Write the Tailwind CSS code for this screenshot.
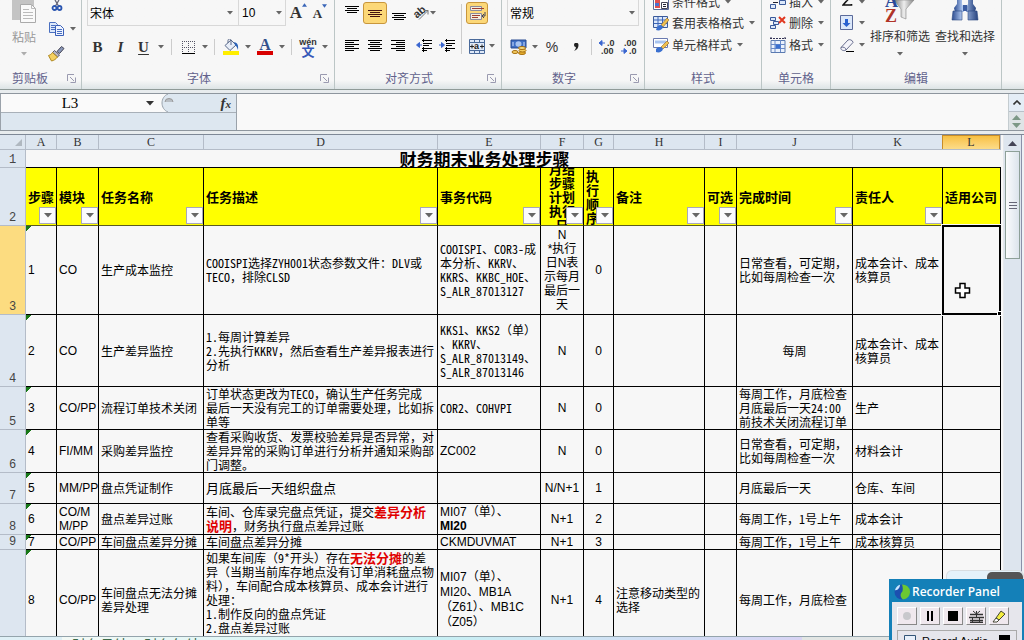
<!DOCTYPE html>
<html lang="zh-CN">
<head>
<meta charset="utf-8">
<title>财务期末业务处理步骤</title>
<script src="https://cdn.jsdelivr.net/npm/@tailwindcss/browser@4"></script>
</head>
<body class="relative flex h-screen flex-col overflow-hidden bg-[#f7f7f7] font-['Noto_Sans_CJK_SC',sans-serif] text-[12px] leading-[14px] text-black">

<svg class="hidden" aria-hidden="true">
  <symbol id="arr" viewBox="0 0 6 4"><path d="M0 0h6L3 3.6z" fill="#666"/></symbol>
  <symbol id="launch" viewBox="0 0 9 9"><path d="M.5 7V.5H7M3 3l4 4M8.5 3.500v5h-5" fill="none" stroke="#9a9ab0"/></symbol>
  <symbol id="filt" viewBox="0 0 8 5"><path d="M0 0h8L4 4.500z" fill="#666"/></symbol>
</svg>

<!-- Ribbon -->
<header class="flex h-[90px] shrink-0 overflow-hidden border-b border-[#8f9a98] bg-linear-to-b from-[#f7f7f7] from-90% to-[#dde4e6] text-[#333]">

  <section class="flex w-[82px] shrink-0 flex-col border-r border-[#bcc6c6]" aria-label="剪贴板">
    <div class="flex h-[71px]">
      <button class="flex w-[48px] flex-col items-center text-[#999]">
        <svg class="h-[24px] w-[28px]" viewBox="0 0 28 24"><path d="M2 0h22v20H2z" fill="#c4c4c4"/><path d="M10.500 4.500h11l4 4v14h-15z" fill="#fafafa" stroke="#aaa"/><path d="M21.500 4.500v4h4M13 9.500h6M13 12.500h10M13 15.500h10M13 18.500h10" fill="none" stroke="#bbb"/></svg>
        <span class="mt-[6px]">粘贴</span>
        <svg class="mt-[8px] h-[4px] w-[6px] opacity-50"><use href="#arr"/></svg>
      </button>
      <div class="flex flex-col">
        <button class="flex h-[12px] w-[18px] justify-center" aria-label="剪切"><svg class="h-[12px] w-[12px]" viewBox="0 0 12 12"><path d="M4 0l3.500 6M8 0L4.500 6" stroke="#667" stroke-width="1.300"/><circle cx="3.500" cy="8" r="2" fill="none" stroke="#2a55b0" stroke-width="1.800"/><circle cx="8.500" cy="8" r="2" fill="none" stroke="#2a55b0" stroke-width="1.800"/></svg></button>
        <button class="mt-[9px] flex h-[16px] items-center gap-[5px]" aria-label="复制"><svg class="h-[14px] w-[17px]" viewBox="0 0 17 14"><path d="M1.500.5h6l2 2v8h-8z" fill="#dce8fa" stroke="#4a6fc0"/><path d="M3 3.500h4M3 5.500h5M3 7.500h4" stroke="#4a6fc0"/><path d="M7.500 3.500h5l3 3v7h-8z" fill="#eef4ff" stroke="#3a5fb8"/><path d="M9 7.500h5M9 9.500h5M9 11.500h5" stroke="#4a6fc0"/></svg><svg class="h-[4px] w-[6px]"><use href="#arr"/></svg></button>
        <button class="mt-[9px] h-[16px] w-[17px]" aria-label="格式刷"><svg class="h-[16px] w-[17px]" viewBox="0 0 17 16"><path d="M13.500.5l2.500 2-4.500 5-2.500-2z" fill="#8a98b8" stroke="#445"/><path d="M6.500 4.500l5 4.500-2 2-5-4.500z" fill="#b8b8c8" stroke="#556"/><path d="M4.500 6.500l5 4.500c-1.500 2-3.500 3.500-6 4L.5 9.500c1.500-.5 3-1.500 4-3z" fill="#f4d060" stroke="#b08820"/></svg></button>
      </div>
    </div>
    <div class="flex items-center pr-[5px] pl-[2px] text-[#62628c]"><span class="flex-1 pr-[10px] pl-[10px]">剪贴板</span><svg class="h-[9px] w-[9px]"><use href="#launch"/></svg></div>
  </section>

  <section class="flex w-[253px] shrink-0 flex-col border-r border-[#bcc6c6]" aria-label="字体">
    <div class="flex h-[26px] pl-[5px]">
      <div class="relative"><select aria-label="字体名称" class="h-[26px] w-[152px] appearance-none border border-t-0 border-[#d8d8d8] pl-[2px] text-black"><option>宋体</option></select><svg class="absolute top-[11px] right-[6px] h-[4px] w-[6px]"><use href="#arr"/></svg></div>
      <div class="relative"><select aria-label="字号" class="h-[26px] w-[47px] appearance-none border border-t-0 border-l-0 border-[#d8d8d8] pl-[3px] font-['Liberation_Sans',sans-serif] text-black"><option>10</option></select><svg class="absolute top-[11px] right-[4px] h-[4px] w-[6px]"><use href="#arr"/></svg></div>
      <button class="flex w-[23px] justify-center pt-[3px] pl-[2px] font-['Liberation_Serif',serif] text-[17px] leading-[20px] font-bold" aria-label="增大字号">A<svg class="h-[4px] w-[5px]" viewBox="0 0 6 4"><path d="M0 4h6L3 0z" fill="#3a66b8"/></svg></button>
      <button class="flex w-[22px] justify-center pt-[4px] font-['Liberation_Serif',serif] text-[13px] leading-[20px] font-bold" aria-label="减小字号">A<svg class="h-[4px] w-[5px]" viewBox="0 0 6 4"><path d="M0 0h6L3 4z" fill="#3a66b8"/></svg></button>
    </div>
    <div class="mt-[9px] flex h-[24px] items-center pl-[4px] font-['Liberation_Serif',serif] text-[15px]">
      <button class="w-[23px] font-bold">B</button>
      <button class="w-[23px] font-bold italic">I</button>
      <button class="w-[23px] font-bold underline underline-offset-2">U</button>
      <button class="flex w-[12px] justify-center" aria-label="下划线选项"><svg class="h-[4px] w-[6px]"><use href="#arr"/></svg></button>
      <span class="mx-[4px] h-[16px] w-px bg-[#ccc]"></span>
      <button class="flex w-[24px] justify-center" aria-label="边框"><svg class="h-[13px] w-[13px]" viewBox="0 0 13 13"><path d="M0 .5h13M0 6.500h13M.5 0v12M6.500 0v12M12.500 0v12" stroke="#556" stroke-dasharray="1 1"/><path d="M0 12.500h13" stroke="#000"/></svg></button>
      <button class="flex w-[10px] justify-center" aria-label="边框选项"><svg class="h-[4px] w-[6px]"><use href="#arr"/></svg></button>
      <span class="mx-[4px] h-[16px] w-px bg-[#ccc]"></span>
      <button class="flex w-[24px] justify-center" aria-label="填充颜色"><svg class="h-[16px] w-[16px]" viewBox="0 0 16 16"><path d="M2 6.500L8 1l5 5-6 5.500z" fill="#e8eef8" stroke="#5a6a8a"/><path d="M8 6V1.500C8-.5 5-.5 5 1.500V4" fill="none" stroke="#5a6a8a"/><path d="M11 3c4 1 4.500 3.500 4 8-1-2-1-3.500-3-5z" fill="#2a62b8"/><path d="M0 12h16v4H0z" fill="#ffee00"/></svg></button>
      <button class="flex w-[10px] justify-center" aria-label="填充颜色选项"><svg class="h-[4px] w-[6px]"><use href="#arr"/></svg></button>
      <button class="flex w-[24px] flex-col items-center text-[16px] leading-[12px] font-bold text-[#33508c]" aria-label="字体颜色">A<span class="h-[4px] w-[16px] bg-[#d80000]"></span></button>
      <button class="flex w-[10px] justify-center" aria-label="字体颜色选项"><svg class="h-[4px] w-[6px]"><use href="#arr"/></svg></button>
      <span class="mx-[4px] h-[16px] w-px bg-[#ccc]"></span>
      <button class="flex w-[24px] flex-col items-center text-[#333]"><span class="font-['Liberation_Sans',sans-serif] text-[9px] leading-[6px] font-bold">wén</span><span class="font-['Noto_Sans_CJK_SC',sans-serif] text-[13px] leading-[11px] font-bold text-[#3558b8]">文</span></button>
      <button class="flex w-[10px] justify-center" aria-label="拼音选项"><svg class="h-[4px] w-[6px]"><use href="#arr"/></svg></button>
    </div>
    <div class="mt-[12px] flex items-center pr-[5px] text-[#62628c]"><span class="flex-1 pr-[4px] text-center">字体</span><svg class="h-[9px] w-[9px]"><use href="#launch"/></svg></div>
  </section>

  <section class="flex w-[167px] shrink-0 flex-col border-r border-[#bcc6c6]" aria-label="对齐方式">
    <div class="flex h-[59px]">
      <div class="flex w-[126px] flex-col pl-[5px]">
        <div class="mt-[2px] flex h-[22px] items-center">
          <button class="flex w-[23px] justify-center" aria-label="顶端对齐"><svg class="h-[16px] w-[14px]" viewBox="0 0 14 16"><path d="M0 1.500h14M2 3.500h10M0 5.500h14M2 7.500h10" stroke="#000"/></svg></button>
          <button class="flex h-[22px] w-[24px] items-center justify-center rounded-[3px] border border-[#c8963c] bg-[#fcd878]" aria-label="垂直居中"><svg class="h-[16px] w-[14px]" viewBox="0 0 14 16"><path d="M0 5.500h14M2 7.500h10M0 9.500h14M2 11.500h10" stroke="#411"/></svg></button>
          <button class="flex w-[23px] justify-center" aria-label="底端对齐"><svg class="h-[16px] w-[14px]" viewBox="0 0 14 16"><path d="M0 8.500h14M2 10.500h10M0 12.500h14M2 14.500h10" stroke="#000"/></svg></button>
          <button class="ml-[3px] flex w-[30px] items-center" aria-label="方向"><svg class="h-[16px] w-[17px] shrink-0" viewBox="0 0 17 16"><text x="1" y="12" transform="rotate(-40 5 9)" font-family="Liberation Sans" font-size="11" font-weight="bold" fill="#333">ab</text><path d="M6 14.500l9-9M11 5.500h4v4" stroke="#777" fill="none"/></svg><svg class="h-[4px] w-[6px] shrink-0"><use href="#arr"/></svg></button>
        </div>
        <div class="mt-[11px] flex h-[22px] items-center">
          <button class="flex w-[24px] justify-center" aria-label="左对齐"><svg class="h-[13px] w-[14px]" viewBox="0 0 14 13"><path d="M0 .5h14M0 2.500h9M0 4.500h14M0 6.500h9M0 8.500h14M0 10.500h9" stroke="#000"/></svg></button>
          <button class="flex w-[22px] justify-center" aria-label="居中"><svg class="h-[13px] w-[14px]" viewBox="0 0 14 13"><path d="M0 .5h14M2 2.500h10M0 4.500h14M2 6.500h10M0 8.500h14M2 10.500h10" stroke="#000"/></svg></button>
          <button class="flex w-[24px] justify-center" aria-label="右对齐"><svg class="h-[13px] w-[14px]" viewBox="0 0 14 13"><path d="M0 .5h14M5 2.500h9M0 4.500h14M5 6.500h9M0 8.500h14M5 10.500h9" stroke="#000"/></svg></button>
          <button class="ml-[2px] flex w-[23px] justify-center" aria-label="减少缩进"><svg class="h-[14px] w-[16px]" viewBox="0 0 16 14"><path d="M6 1.500h10M8 4.500h8M8 6.500h5M6 9.500h10M6 11.500h5" stroke="#000"/><path d="M7.500 0v14" stroke="#000" stroke-dasharray="1 1"/><path d="M6 6H3M3.500 3.500L.5 6l3 2.500z" stroke="#3a66d0" fill="#3a66d0"/></svg></button>
          <button class="flex w-[23px] justify-center" aria-label="增加缩进"><svg class="h-[14px] w-[16px]" viewBox="0 0 16 14"><path d="M6 1.500h10M8 4.500h8M8 6.500h5M6 9.500h10M6 11.500h5" stroke="#000"/><path d="M7.500 0v14" stroke="#000" stroke-dasharray="1 1"/><path d="M0 6h3M2.500 3.500l3 2.500-3 2.500z" stroke="#3a66d0" fill="#3a66d0"/></svg></button>
        </div>
      </div>
      <span class="mt-[4px] h-[50px] w-px bg-[#ccc]"></span>
      <div class="flex flex-col pl-[4px]">
        <button class="mt-[2px] flex h-[22px] w-[22px] items-center justify-center rounded-[3px] border border-[#c8963c] bg-[#fcd878]" aria-label="自动换行"><svg class="h-[18px] w-[18px]" viewBox="0 0 18 18"><path d="M2.500 2.500h11v4h-11zM2.500 9.500h11v6h-11z" fill="#f4ecdc" stroke="#8a8a9a"/><path d="M4 4.500h12M4 11.500h8M4 13.500h6" stroke="#a04030"/><path d="M17 8v4h-2M16 10l-2 2 2 2" fill="none" stroke="#445"/></svg></button>
        <button class="mt-[11px] flex h-[22px] items-center gap-[4px] pl-[3px]" aria-label="合并后居中"><svg class="h-[15px] w-[16px]" viewBox="0 0 16 15"><path d="M.5.5h15v14H.5zM.5 3.500h15M.5 11.500h15M5.500.5v3M10.500.5v3M5.500 11.500v3M10.500 11.500v3" fill="#dfe9f8" stroke="#4a6a9a"/><path d="M1 7.500h4M15 7.500h-4M3 5.500v4M13 5.500v4" stroke="#222"/><text x="5" y="10" font-family="Liberation Sans" font-size="9" font-weight="bold" fill="#222">a</text></svg><svg class="h-[4px] w-[6px]"><use href="#arr"/></svg></button>
      </div>
    </div>
    <div class="mt-[12px] flex items-center pr-[5px] text-[#62628c]"><span class="flex-1 pr-[4px] text-center">对齐方式</span><svg class="h-[9px] w-[9px]"><use href="#launch"/></svg></div>
  </section>

  <section class="flex w-[143px] shrink-0 flex-col border-r border-[#bcc6c6]" aria-label="数字">
    <div class="relative h-[26px] px-[5px]"><select aria-label="数字格式" class="h-[26px] w-full appearance-none border border-t-0 border-[#d8d8d8] pl-[2px] text-black"><option>常规</option></select><svg class="absolute top-[11px] right-[9px] h-[4px] w-[6px]"><use href="#arr"/></svg></div>
    <div class="mt-[9px] flex h-[24px] items-center pl-[8px]">
      <button class="flex items-center gap-[5px]" aria-label="会计数字格式"><svg class="h-[16px] w-[17px]" viewBox="0 0 17 16"><path d="M1 1h15v8H1z" fill="#3f6fc4" stroke="#284a90"/><ellipse cx="8.500" cy="5" rx="3" ry="2.800" fill="#a8c4f0"/><path d="M3 3v4M14 3v4" stroke="#cfe0ff"/><ellipse cx="12" cy="14" rx="3.500" ry="1.500" fill="#e8b030" stroke="#a87010"/><ellipse cx="12.500" cy="11.500" rx="3.500" ry="1.500" fill="#f4cc60" stroke="#a87010"/><ellipse cx="12" cy="9" rx="3.500" ry="1.500" fill="#f8dc80" stroke="#a87010"/><ellipse cx="5" cy="13" rx="3" ry="1.500" fill="#f4cc60" stroke="#a87010"/></svg><svg class="h-[4px] w-[6px]"><use href="#arr"/></svg></button>
      <button class="ml-[2px] w-[24px] font-['Liberation_Sans',sans-serif] text-[14px]">%</button>
      <button class="flex w-[24px] justify-center" aria-label="千位分隔样式"><svg class="h-[8px] w-[5px]" viewBox="0 0 5 8"><path d="M0 2a2 2 0 1 1 4.500 0C4.500 5 3 7 0 8c1.500-1.500 2-3 1.800-4A2 2 0 0 1 0 2z" fill="#222"/></svg></button>
      <span class="mx-[3px] h-[16px] w-px bg-[#ccc]"></span>
      <button class="flex w-[24px] justify-center" aria-label="增加小数位数"><svg class="h-[16px] w-[18px]" viewBox="0 0 18 16"><path d="M7 4H3M4 1.500L1 4l3 2.500z" stroke="#3a66d0" fill="#3a66d0"/><g font-family="Liberation Sans" font-size="9" font-weight="bold" fill="#333"><text x="9" y="7">.0</text><text x="3" y="15">.00</text></g></svg></button>
      <button class="flex w-[22px] justify-center" aria-label="减少小数位数"><svg class="h-[16px] w-[18px]" viewBox="0 0 18 16"><path d="M0 12h4M3 9.500L6 12l-3 2.500z" stroke="#3a66d0" fill="#3a66d0"/><g font-family="Liberation Sans" font-size="9" font-weight="bold" fill="#333"><text x="3" y="7">.00</text><text x="8" y="15">.0</text></g></svg></button>
    </div>
    <div class="mt-[12px] flex items-center pr-[5px] text-[#62628c]"><span class="flex-1 pr-[4px] text-center">数字</span><svg class="h-[9px] w-[9px]"><use href="#launch"/></svg></div>
  </section>

  <section class="flex w-[117px] shrink-0 flex-col border-r border-[#bcc6c6]" aria-label="样式">
    <div class="-mt-[9px] flex h-[80px] flex-col pl-[8px]">
      <button class="flex h-[21px] items-center gap-[3px]"><svg class="h-[16px] w-[16px]" viewBox="0 0 16 16"><path d="M.5.500h15v15H.5z" fill="#fff" stroke="#5a6a9a"/><path d="M2 2h5v12H2z" fill="#e05050"/><path d="M2 9h4v3H2z" fill="#4a70d0"/><path d="M8.500 8.500h6v6h-6z" fill="#fff" stroke="#445"/><path d="M10 10.500h3M10 12.500h3" stroke="#223"/></svg>条件格式<svg class="ml-[2px] h-[4px] w-[6px]"><use href="#arr"/></svg></button>
      <button class="flex h-[22px] items-center gap-[3px]"><svg class="h-[16px] w-[16px]" viewBox="0 0 16 16"><path d="M.5 1.500h14v11H.5z" fill="#dce8fa" stroke="#3a5a9a"/><path d="M1 5h13M1 8.500h13M5 2v10M9.500 2v10" stroke="#3a64b8"/><path d="M14 3l2 2-6 7-2-2z" fill="#f0c050" stroke="#906820" stroke-width=".6"/><path d="M4 12c3-3 5-2 6 0-1 3-4 4-7 3z" fill="#3a70d0"/></svg>套用表格格式<svg class="ml-[2px] h-[4px] w-[6px]"><use href="#arr"/></svg></button>
      <button class="flex h-[22px] items-center gap-[3px]"><svg class="h-[16px] w-[16px]" viewBox="0 0 16 16"><path d="M.5 1.500h14v9H.5z" fill="#fff" stroke="#6a7ab0"/><path d="M2 3.500h11v3H2z" fill="#a8c4f0"/><path d="M14 4l2 2-6 6-2-2z" fill="#f0c050" stroke="#906820" stroke-width=".6"/><path d="M3 12c3-3 6-2 7 0-1 3-4 4-7 3z" fill="#3a70d0"/></svg>单元格样式<svg class="ml-[2px] h-[4px] w-[6px]"><use href="#arr"/></svg></button>
    </div>
    <div class="text-center text-[#62628c]">样式</div>
  </section>

  <section class="flex w-[69px] shrink-0 flex-col border-r border-[#bcc6c6]" aria-label="单元格">
    <div class="-mt-[9px] flex h-[80px] flex-col pl-[8px]">
      <button class="flex h-[21px] items-center gap-[3px]"><svg class="h-[16px] w-[16px]" viewBox="0 0 16 16"><path d="M.5 1.500h5v4h-5zM.5 10.500h5v4h-5zM9.500 6.500h6v4h-6z" fill="#dce8fa" stroke="#3a5a9a"/><path d="M8 8.500H3" stroke="#223"/></svg>插入<svg class="ml-[2px] h-[4px] w-[6px]"><use href="#arr"/></svg></button>
      <button class="flex h-[22px] items-center gap-[3px]"><svg class="h-[16px] w-[16px]" viewBox="0 0 16 16"><path d="M.5 2.500h5v3h-5zM3.500 6.500h5v3h-5zM.5 10.500h5v3h-5z" fill="#dce8fa" stroke="#3a5a9a"/><path d="M9 2l6 6M15 2L9 8" stroke="#e03820" stroke-width="2"/></svg>删除<svg class="ml-[2px] h-[4px] w-[6px]"><use href="#arr"/></svg></button>
      <button class="flex h-[22px] items-center gap-[3px]"><svg class="h-[16px] w-[16px]" viewBox="0 0 16 16"><path d="M1 3.500h14v12H1z" fill="#eaf1fc" stroke="#5a7ab0"/><path d="M1 7.500h14M1 11.500h14M5 3v12M10.500 3v12" stroke="#6a8ac8"/><path d="M5.500 7.500h5v4h-5z" fill="#3a70d0"/><path d="M0 1.500h16M1 0v3M15 0v3" stroke="#335" stroke-dasharray="2 1"/></svg>格式<svg class="ml-[2px] h-[4px] w-[6px]"><use href="#arr"/></svg></button>
    </div>
    <div class="text-center text-[#62628c]">单元格</div>
  </section>

  <section class="flex w-[171px] shrink-0 flex-col border-r border-[#bcc6c6]" aria-label="编辑">
    <div class="flex h-[71px] pl-[9px]">
      <div class="-mt-[9px] flex w-[27px] flex-col">
        <button class="flex h-[21px] items-center gap-[6px] pl-[2px]" aria-label="自动求和"><svg class="h-[12px] w-[11px]" viewBox="0 0 11 12"><path d="M9.500 1V0H1l4.500 4L1 9h8.500V8" fill="none" stroke="#111" stroke-width="1.600"/></svg><svg class="h-[4px] w-[6px]"><use href="#arr"/></svg></button>
        <button class="flex h-[22px] items-center gap-[5px]" aria-label="填充"><svg class="h-[16px] w-[14px]" viewBox="0 0 14 16"><path d="M.5.500h12v14H.5z" fill="#dce8fa" stroke="#5a6a9a"/><path d="M5 4h3v4h2.500L6.500 12 2.500 8H5z" fill="#2a62d0"/></svg><svg class="h-[4px] w-[6px]"><use href="#arr"/></svg></button>
        <button class="flex h-[22px] items-center gap-[5px]" aria-label="清除"><svg class="h-[13px] w-[14px]" viewBox="0 0 14 13"><path d="M1 8.500L8 1c1-1 5 0 5 2.500L6 11c-2 1.500-6 0-5-2.500z" fill="#f4f4fa" stroke="#6a7090"/><path d="M1 8.500c2-1 5 0 5 2.500" fill="none" stroke="#6a7090"/><path d="M6 12.500h8" stroke="#000"/></svg><svg class="h-[4px] w-[6px]"><use href="#arr"/></svg></button>
      </div>
      <button class="flex w-[66px] flex-col items-center whitespace-nowrap"><svg class="h-[23px] w-[32px]" viewBox="0 0 32 23"><defs><linearGradient id="fun"><stop offset="0" stop-color="#777"/><stop offset=".5" stop-color="#eee"/><stop offset="1" stop-color="#888"/></linearGradient></defs><path d="M10 0h20l-8 9v10l-5-2V9z" fill="url(#fun)" stroke="#888" stroke-width=".6"/><g font-family="Liberation Serif" font-size="18" font-weight="bold"><text x="1" y="7" fill="#2a4a9a">A</text><text x="1" y="22" fill="#b03428">Z</text></g></svg><span class="mt-[6px]">排序和筛选</span><svg class="mt-[9px] h-[4px] w-[6px]"><use href="#arr"/></svg></button>
      <button class="flex w-[64px] flex-col items-center whitespace-nowrap"><svg class="h-[23px] w-[28px]" viewBox="0 0 28 23"><defs><linearGradient id="bin"><stop offset="0" stop-color="#2c4c90"/><stop offset=".4" stop-color="#b4ccf4"/><stop offset="1" stop-color="#26427e"/></linearGradient></defs><path d="M6 0h5v4l2 4v4H4L3 8l3-4zM17 0h5v4l3 4-1 4h-9V8l2-4z" fill="url(#bin)"/><path d="M12 5h4v6h-4z" fill="#3c5ca0"/><path d="M2 11h9v9H1zM17 11h9l1 9H17z" fill="url(#bin)" stroke="#2a4680" stroke-width=".6"/></svg><span class="mt-[6px]">查找和选择</span><svg class="mt-[9px] h-[4px] w-[6px]"><use href="#arr"/></svg></button>
    </div>
    <div class="text-center text-[#62628c]">编辑</div>
  </section>
</header>

<!-- Formula bar -->
<div class="flex h-[45px] shrink-0 flex-col border-b border-[#7e8896] bg-[#e8ecee] pt-[3px]">
  <div class="flex h-[38px] border-y border-[#8e969e]">
    <div class="flex w-[237px] shrink-0 flex-col border-x border-[#9aa2aa] bg-[#dde7f0]">
      <div class="flex h-[19px] items-center border-b border-[#a8b0b8]">
        <div class="relative h-full w-[160px] bg-[#fafafa]"><input aria-label="名称框" value="L3" class="h-full w-[138px] bg-transparent text-center font-['Liberation_Serif',serif] text-[15px]"><svg class="absolute top-[7px] right-[7px] h-[5px] w-[8px]" viewBox="0 0 8 5"><path d="M0 0h8L4 4.500z" fill="#333"/></svg></div>
        <svg class="h-[18px] w-[16px]" viewBox="0 0 16 18"><path d="M0 0h7C-1 3-1 15 7 18H0z" fill="#fafafa"/><path d="M7 0C-1 3-1 15 7 18" fill="none" stroke="#98a2ac"/><path d="M4 8a4 3.500 0 0 1 8 0" fill="#b8bec4" stroke="#999"/></svg>
        <button class="mr-[5px] ml-auto font-['Liberation_Serif',serif] text-[15px] font-bold text-[#333] italic" aria-label="插入函数">f<span class="text-[11px]">x</span></button>
      </div>
    </div>
    <input aria-label="编辑栏" class="min-w-0 flex-1 bg-[#f9f9f9]">
    <div class="flex w-[16px] shrink-0 flex-col border-l border-[#c4ccd0] bg-[#dfe4e6]">
      <button class="flex h-[18px] items-center justify-center border-b border-[#b8c0c8] bg-[#e4edf6]" aria-label="向上滚动"><svg class="h-[5px] w-[8px]" viewBox="0 0 8 5"><path d="M.5 4.500L4 1l3.500 3.500" fill="none" stroke="#333" stroke-width="1.600"/></svg></button>
      <button class="flex flex-1 flex-col items-center justify-center gap-[3px]" aria-label="调整编辑栏"><svg class="h-[5px] w-[9px]" viewBox="0 0 9 5"><path d="M0 5h9L4.500 0z" fill="#7d9886"/></svg><svg class="h-[5px] w-[9px]" viewBox="0 0 9 5"><path d="M0 0h9L4.500 5z" fill="#7d9886"/></svg></button>
    </div>
  </div>
</div>

<!-- Worksheet -->
<main class="flex min-h-0 flex-1 overflow-hidden">
  <table id="sheet" class="w-[1001px] shrink-0 table-fixed border-separate border-spacing-0 self-start [&_tbody_td]:border-r [&_tbody_td]:border-b [&_tbody_td]:border-black [&_tbody_td]:px-[2px] [&_tbody_th]:border-r [&_tbody_th]:border-b [&_tbody_th]:border-[#b4bcc8] [&_tbody_th]:bg-[#dde6f0] [&_tbody_th]:align-bottom [&_tbody_th]:text-[#444] [&_td]:py-0 [&_th]:p-0 [&_th]:font-['Liberation_Mono',monospace] [&_th]:font-normal">
    <colgroup><col class="w-[26px]"><col class="w-[31px]"><col class="w-[42px]"><col class="w-[105px]"><col class="w-[234px]"><col class="w-[103px]"><col class="w-[43px]"><col class="w-[30px]"><col class="w-[91px]"><col class="w-[32px]"><col class="w-[116px]"><col class="w-[90px]"><col class="w-[58px]"></colgroup>
    <thead>
      <tr class="h-[15px] [&_th]:border-r [&_th]:border-b [&_th]:border-[#b4bcc8] [&_th]:bg-[#dde6f0] [&_th]:font-['Liberation_Serif',serif] [&_th]:text-[12px] [&_th]:text-[#333]">
        <th aria-label="全选"><svg class="ml-auto mr-[3px] h-[7px] w-[7px]" viewBox="0 0 7 7"><path d="M7 0v7H0z" fill="#b0b8c0"/></svg></th>
        <th>A</th><th>B</th><th>C</th><th>D</th><th>E</th><th>F</th><th>G</th><th>H</th><th>I</th><th>J</th><th>K</th><th><div class="-ml-px h-[14px] border border-b-0 border-[#c88c28] bg-linear-to-b from-[#f8c040] to-[#fcdc88] leading-[13px]">L</div></th>
      </tr>
    </thead>
    <tbody>
      <tr class="h-[18px]">
        <th>1</th>
        <td colspan="11" class="border-r-0! text-center text-[17px] leading-[16px] font-bold">财务期末业务处理步骤</td>
        <td class="border-r-0!"></td>
      </tr>
      <tr class="h-[58px] text-[13px] font-bold [&_button]:absolute [&_button]:right-0 [&_button]:bottom-[1px] [&_button]:flex [&_button]:h-[17px] [&_button]:w-[17px] [&_button]:items-center [&_button]:justify-center [&_button]:border [&_button]:border-[#a8a8b8] [&_button]:bg-[#fbfbfd] [&_td]:relative [&_td]:border-b-[#5c5c20]! [&_td]:bg-[#ffff00] [&_td]:whitespace-nowrap [&_th]:text-[12px]">
        <th>2</th>
        <td>步骤<button aria-label="筛选步骤"><svg class="h-[5px] w-[8px]"><use href="#filt"/></svg></button></td>
        <td>模块<button aria-label="筛选模块"><svg class="h-[5px] w-[8px]"><use href="#filt"/></svg></button></td>
        <td>任务名称<button aria-label="筛选任务名称"><svg class="h-[5px] w-[8px]"><use href="#filt"/></svg></button></td>
        <td>任务描述<button aria-label="筛选任务描述"><svg class="h-[5px] w-[8px]"><use href="#filt"/></svg></button></td>
        <td>事务代码<button aria-label="筛选事务代码"><svg class="h-[5px] w-[8px]"><use href="#filt"/></svg></button></td>
        <td><div class="flex h-[57px] flex-col justify-center overflow-hidden text-center"><span>月结</span><span>步骤</span><span>计划</span><span>执行</span><span>日</span></div><button aria-label="筛选计划执行日"><svg class="h-[5px] w-[8px]"><use href="#filt"/></svg></button></td>
        <td>执<br>行<br>顺<br>序<button aria-label="筛选执行顺序"><svg class="h-[5px] w-[8px]"><use href="#filt"/></svg></button></td>
        <td>备注<button aria-label="筛选备注"><svg class="h-[5px] w-[8px]"><use href="#filt"/></svg></button></td>
        <td>可选<button aria-label="筛选可选"><svg class="h-[5px] w-[8px]"><use href="#filt"/></svg></button></td>
        <td>完成时间<button aria-label="筛选完成时间"><svg class="h-[5px] w-[8px]"><use href="#filt"/></svg></button></td>
        <td>责任人<button aria-label="筛选责任人"><svg class="h-[5px] w-[8px]"><use href="#filt"/></svg></button></td>
        <td>适用公司</td>
      </tr>
    </tbody>
    <!-- code: transaction codes and figures in half-width forms -->
    <tbody class="[&_code]:font-['Noto_Sans_CJK_SC',sans-serif] [&_code]:[font-feature-settings:'hwid'] [&_td]:whitespace-nowrap [&_td:nth-child(2)]:bg-[linear-gradient(135deg,#187818_4px,transparent_4px)] [&_td:nth-child(2)]:font-['Liberation_Sans',sans-serif] [&_td:nth-child(3)]:font-['Liberation_Sans',sans-serif] [&_td:nth-child(7)]:text-center [&_td:nth-child(7)]:font-['Liberation_Sans','Noto_Sans_CJK_SC',sans-serif] [&_td:nth-child(8)]:text-center [&_td:nth-child(8)]:font-['Liberation_Sans',sans-serif]">
      <tr class="h-[89px]">
        <th class="bg-[#fcdc80]!">3</th><td>1</td><td>CO</td><td>生产成本监控</td>
        <td><code>COOISPI</code>选择<code>ZYH001</code>状态参数文件：<code>DLV</code>或<br><code>TECO</code>，排除<code>CLSD</code></td>
        <td><code>COOISPI</code>、<code>COR3-</code>成<br>本分析、<code>KKRV</code>、<br><code>KKRS</code>、<code>KKBC_HOE</code>、<br><code>S_ALR_87013127</code></td>
        <td>N<br>*执行<br>日N表<br>示每月<br>最后一<br>天</td><td>0</td><td></td><td></td>
        <td>日常查看，可定期，<br>比如每周检查一次</td><td>成本会计、成本<br>核算员</td>
        <td class="relative"><div class="absolute -inset-x-px -top-px -bottom-px border-2 border-black outline outline-[#f7f7f7]"><span class="absolute -right-[3px] -bottom-[3px] h-[5px] w-[5px] border border-white bg-black"></span></div>
          <svg class="absolute top-[56px] left-[11px] h-[17px] w-[17px]" viewBox="0 0 17 17"><path d="M6 1.500h5V6h4.500v5H11v4.500H6V11H1.500V6H6z" fill="#fff" stroke="#000" stroke-width="1.500"/></svg></td>
      </tr>
      <tr class="h-[72px]">
        <th>4</th><td>2</td><td>CO</td><td>生产差异监控</td>
        <td><code>1.</code>每周计算差异<br><code>2.</code>先执行<code>KKRV</code>，然后查看生产差异报表进行<br>分析</td>
        <td><code>KKS1</code>、<code>KKS2</code>（单）<br>、<code>KKRV</code>、<br><code>S_ALR_87013149</code>、<br><code>S_ALR_87013146</code></td>
        <td>N</td><td>0</td><td></td><td></td><td class="text-center">每周</td><td>成本会计、成本<br>核算员</td><td></td>
      </tr>
      <tr class="h-[43px]">
        <th>5</th><td>3</td><td>CO/PP</td><td>流程订单技术关闭</td>
        <td>订单状态更改为<code>TECO</code>，确认生产任务完成<br>最后一天没有完工的订单需要处理，比如拆<br>单等</td>
        <td><code>COR2</code>、<code>COHVPI</code></td><td>N</td><td>0</td><td></td><td></td>
        <td>每周工作，月底检查<br>月底最后一天<code>24:00</code><br>前技术关闭流程订单</td><td>生产</td><td></td>
      </tr>
      <tr class="h-[43px]">
        <th>6</th><td>4</td><td>FI/MM</td><td>采购差异监控</td>
        <td>查看采购收货、发票校验差异是否异常，对<br>差异异常的采购订单进行分析并通知采购部<br>门调整。</td>
        <td class="font-['Liberation_Sans',sans-serif]">ZC002</td><td>N</td><td>0</td><td></td><td></td>
        <td>日常查看，可定期，<br>比如每周检查一次</td><td>材料会计</td><td></td>
      </tr>
      <tr class="h-[31px]">
        <th>7</th><td>5</td><td>MM/PP</td><td>盘点凭证制作</td><td class="text-[13px]">月底最后一天组织盘点</td>
        <td></td><td>N/N+1</td><td>1</td><td></td><td></td><td>月底最后一天</td><td>仓库、车间</td><td></td>
      </tr>
      <tr class="h-[31px]">
        <th>8</th><td>6</td><td>CO/M<br>M/PP</td><td>盘点差异过账</td>
        <td>车间、仓库录完盘点凭证，提交<b class="text-[13px] text-[#e00000]">差异分析</b><br><b class="text-[13px] text-[#e00000]">说明</b>，财务执行盘点差异过账</td>
        <td class="font-['Liberation_Sans','Noto_Sans_CJK_SC',sans-serif]">MI07（单）、<br><b>MI20</b></td>
        <td>N+1</td><td>2</td><td></td><td></td><td>每周工作，<code>1</code>号上午</td><td>成本会计</td><td></td>
      </tr>
      <tr class="h-[15px]">
        <th>9</th><td>7</td><td>CO/PP</td><td>车间盘点差异分摊</td><td>车间盘点差异分摊</td>
        <td class="font-['Liberation_Sans',sans-serif]">CKMDUVMAT</td><td>N+1</td><td>3</td><td></td><td></td><td>每周工作，<code>1</code>号上午</td><td>成本核算员</td><td></td>
      </tr>
      <tr class="h-[100px]">
        <th>10</th><td>8</td><td>CO/PP</td><td>车间盘点无法分摊<br>差异处理</td>
        <td>如果车间库（<code>9*</code>开头）存在<b class="text-[13px] text-[#e00000]">无法分摊</b>的差<br>异（当期当前库存地点没有订单消耗盘点物<br>料），车间配合成本核算员、成本会计进行<br>处理：<br><code>1.</code>制作反向的盘点凭证<br><code>2.</code>盘点差异过账<br>&nbsp;</td>
        <td class="font-['Liberation_Sans','Noto_Sans_CJK_SC',sans-serif] leading-[15px]">MI07（单）、<br>MI20、MB1A<br>（Z61）、MB1C<br>（Z05）</td>
        <td>N+1</td><td>4</td><td>注意移动类型的<br>选择</td><td></td><td>每周工作，月底检查</td><td></td><td></td>
      </tr>
    </tbody>
  </table>

  <div class="ml-[2px] flex flex-1 border-l border-[#e4e8ec]">
    <div class="flex w-[18px] flex-col items-center border-r border-[#8a90a8] bg-[#dde5ee]" role="scrollbar" aria-label="垂直滚动条" aria-controls="sheet" aria-valuenow="0">
      <button class="flex h-[16px] items-center" aria-label="上"><svg class="h-[5px] w-[9px]" viewBox="0 0 9 5"><path d="M0 5h9L4.500 0z" fill="#445"/></svg></button>
      <div class="flex h-[108px] w-[15px] flex-col items-center justify-center gap-px border border-[#8ea098] bg-linear-to-r from-[#fbfcfd] to-[#dce4ec]">
        <span class="h-px w-[8px] bg-[#667]"></span><span class="mt-px h-px w-[8px] bg-[#667]"></span><span class="mt-px h-px w-[8px] bg-[#667]"></span>
      </div>
    </div>
    <div class="flex-1 bg-[#eef1f4]"></div>
  </div>
</main>

<!-- Sheet tabs -->
<footer class="flex h-[4px] shrink-0 items-start overflow-hidden border-t border-[#94a4ac] bg-[#dff0f6] text-[14px] leading-[14px] text-[#3d6b4a]">
  <nav class="ml-[62px] flex w-[740px] gap-[16px] overflow-hidden bg-linear-to-r from-[#f4faf6] via-[#c8f0f4] to-[#d8d4f4] pl-[10px]"><a href="#m">财务月结</a><a href="#y">财务年结</a></nav>
  <div class="h-full flex-1 bg-[#e2e6e4]"></div>
</footer>

<!-- Floating recorder window -->
<div class="absolute right-0 bottom-[61px] flex h-[9px] w-[78px] overflow-hidden rounded-t-[6px] border border-b-0 border-[#d8dde0] bg-[#e4f2fa]"><span class="ml-[40px] mt-px flex-1 rounded-t-[5px] bg-[#555]"></span></div>
<aside class="absolute right-0 bottom-0 h-[61px] w-[135px] overflow-hidden bg-[#1480b8] pl-[3px] pr-[2px]" aria-label="Recorder Panel">
  <div class="flex h-[23px] items-center gap-[2px] pt-[3px] pl-[2px] font-['Open_Sans',sans-serif] text-[12px] font-semibold text-white">
    <svg class="h-[16px] w-[16px]" viewBox="0 0 16 16"><circle cx="8" cy="8" r="7.500" fill="#1c50b0"/><path d="M8 .5a7.500 7.500 0 0 1 1 15C5 12 7 9 8 8S9 3 8 .5z" fill="#6cc832"/><path d="M6 .8A7.500 7.500 0 0 0 1 6c2 1 5-2 5-5.200z" fill="#c8e8ff"/></svg>Recorder Panel
  </div>
  <div class="h-[40px] bg-[#e6e6ec] px-[5px] pt-[5px]">
    <div class="flex gap-[3px] [&_button]:flex [&_button]:h-[18px] [&_button]:w-[20px] [&_button]:items-center [&_button]:justify-center [&_button]:border [&_button]:border-t-white [&_button]:border-r-[#888] [&_button]:border-b-[#888] [&_button]:border-l-white [&_button]:bg-[#f0e8ee]">
      <button aria-label="录制" disabled><svg class="h-[10px] w-[10px]" viewBox="0 0 10 10"><circle cx="5" cy="5" r="4" fill="#c8c8cc"/></svg></button>
      <button aria-label="暂停"><svg class="h-[10px] w-[8px]" viewBox="0 0 8 10"><path d="M1 0h2v10H1zM5 0h2v10H5z" fill="#000"/></svg></button>
      <button aria-label="停止"><svg class="h-[10px] w-[10px]" viewBox="0 0 10 10"><path d="M0 0h10v10H0z" fill="#000"/></svg></button>
      <button aria-label="选项"><svg class="h-[13px] w-[15px]" viewBox="0 0 15 13"><path d="M1 4.500h13M0 7.500h15M1 10.500h13M1 12.500h13" stroke="#333" stroke-width="1.400"/><path d="M7.500 1v6M3.500 7v6M10.500 7v6M4 1l3.500 3L11 1" stroke="#333" fill="none"/></svg></button>
      <button aria-label="标注"><svg class="h-[13px] w-[14px]" viewBox="0 0 14 13"><path d="M9 1l4 3-6 6-3-2z" fill="#f4ec40" stroke="#443"/><path d="M4 8l3 2-2 2H1z" fill="#fff" stroke="#443"/></svg></button>
    </div>
    <div class="mt-[5px] flex h-[16px] items-start gap-[6px] border border-[#aaa] pt-[4px] pl-[6px] font-['Liberation_Sans',sans-serif] text-[11px] leading-[12px]">
      <svg class="h-[12px] w-[12px] shrink-0" viewBox="0 0 12 12"><path d="M.5.500h11v11H.5z" fill="#e8f0fa" stroke="#357"/></svg><span class="whitespace-nowrap">Record Audio</span><span class="ml-auto mr-[6px] h-[12px] w-[11px] bg-black"></span>
    </div>
  </div>
</aside>
</body>
</html>
